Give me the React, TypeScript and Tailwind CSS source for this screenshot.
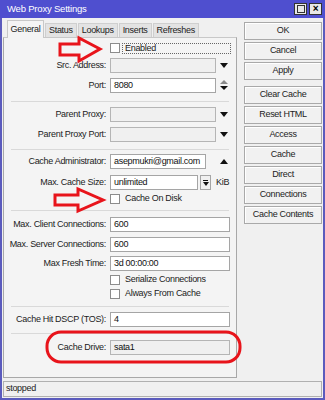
import React from 'react';

const font = 'font-["Liberation_Sans",Arial,sans-serif]';

function Down() {
  return (
    <svg width="8" height="5" viewBox="0 0 8 5"><polygon points="0,0 8,0 4,5" fill="#111" /></svg>
  );
}

function Up() {
  return (
    <svg width="8" height="5" viewBox="0 0 8 5"><polygon points="0,5 8,5 4,0" fill="#111" /></svg>
  );
}

function UpDown() {
  return (
    <svg width="8" height="11" viewBox="0 0 8 11">
      <polygon points="0,4 8,4 4,0" fill="#8a8a8a" />
      <polygon points="0,6 8,6 4,10" fill="#111" />
    </svg>
  );
}

function Input({ value, disabled, w }: { value?: string; disabled?: boolean; w: string }) {
  return (
    <div className={`${w} h-[15px] border ${disabled ? 'border-[#b5b5b5] bg-[#f0f0f0]' : 'border-[#a5a5a5] bg-white'} px-[3px] leading-[13px] text-[#111]`}>
      {value}
    </div>
  );
}

function Row({ label, mt, children }: { label: string; mt: string; children: React.ReactNode }) {
  return (
    <div className={`flex items-center ${mt} h-[15px]`}>
      <div className="w-[103px] shrink-0 pr-[1px] text-right text-[#222]">{label}</div>
      <div className="ml-[3px] flex items-center">{children}</div>
    </div>
  );
}

function Check({ label, mt, focus }: { label: string; mt: string; focus?: boolean }) {
  return (
    <div className={`flex items-center ${mt} h-[12px] pl-[106px]`}>
      <div className="h-[10px] w-[10px] border border-[#8c8c8c] bg-white" />
      {focus ? (
        <div className="ml-[2px] h-[11px] w-[109px] border border-dotted border-[#666] pl-[2px] leading-[9px] text-[#222]">{label}</div>
      ) : (
        <div className="ml-[5px] text-[#222]">{label}</div>
      )}
    </div>
  );
}

function Sep({ mt }: { mt: string }) {
  return <div className={`${mt} mx-[7px] h-px bg-[#d9d9d9]`} />;
}

function Btn({ label, mt }: { label: string; mt: string }) {
  return (
    <div className={`${mt} flex h-[18px] items-center justify-center border border-[#a9a9a9] bg-[#f1f1f1] text-[#222] shadow-[inset_1px_1px_0_#fff]`}>
      {label}
    </div>
  );
}

export default function App() {
  const tabs = ['Status', 'Lookups', 'Inserts', 'Refreshes'];
  return (
    <div className={`relative flex h-[400px] w-[325px] flex-col border-x-2 border-b-2 border-[#5b5bbd] bg-[#f0f0f0] text-[9px] tracking-[-0.3px] ${font}`}>
      <div className="-mx-[2px] flex h-[18px] shrink-0 items-center justify-between bg-[#4f4fcf] pl-[7px] pr-[3px]">
        <span className="text-[9.5px] tracking-[-0.2px] text-white">Web Proxy Settings</span>
        <div className="flex gap-[2px]">
          <div className="flex h-[12px] w-[13px] items-center justify-center border border-[#333] bg-[#e8e8e8]">
            <div className="h-[8px] w-[8px] border border-[#333]" />
          </div>
          <div className="flex h-[12px] w-[13px] items-center justify-center border border-[#333] bg-[#e8e8e8] text-[10px] font-bold leading-none text-black">×</div>
        </div>
      </div>

      <div className="flex flex-1">
        <div className="ml-[1px] flex w-[234px] flex-col">
          <div className="mt-[2px] flex h-[17px] items-end pl-[4px]">
            <div className="relative z-10 -mb-px flex h-[18px] w-[37px] items-center justify-center border border-b-0 border-[#c8c8c8] bg-[#f4f4f4] text-[#222]">General</div>
            {tabs.map((t, i) => (
              <div key={t} className={`flex h-[14px] items-center border border-b-0 border-[#cfcfcf] bg-[#e3e3e3] px-[3px] text-[#222] ${i === 0 ? 'ml-[1px]' : 'ml-[1px]'}`}>
                {t}
              </div>
            ))}
          </div>
          <div className="flex h-[341px] flex-col border border-[#a8a8a8] border-t-[#c8c8c8] bg-[#f4f4f4]">
            <Check label="Enabled" mt="mt-[4px]" focus />
            <Row label="Src. Address:" mt="mt-[4px]">
              <Input w="w-[106px]" disabled />
              <div className="ml-[4px]"><Down /></div>
            </Row>
            <Row label="Port:" mt="mt-[5px]">
              <Input w="w-[106px]" value="8080" />
              <div className="ml-[4px]"><UpDown /></div>
            </Row>
            <Sep mt="mt-[8px]" />
            <Row label="Parent Proxy:" mt="mt-[5px]">
              <Input w="w-[106px]" disabled />
              <div className="ml-[4px]"><Down /></div>
            </Row>
            <Row label="Parent Proxy Port:" mt="mt-[5px]">
              <Input w="w-[106px]" disabled />
              <div className="ml-[4px]"><Down /></div>
            </Row>
            <Sep mt="mt-[7px]" />
            <Row label="Cache Administrator:" mt="mt-[4px]">
              <Input w="w-[96px]" value="asepmukri@gmail.com" />
              <div className="ml-[14px]"><Up /></div>
            </Row>
            <Row label="Max. Cache Size:" mt="mt-[6px]">
              <Input w="w-[88px]" value="unlimited" />
              <div className="ml-[2px] flex h-[15px] w-[11px] flex-col items-center justify-center border border-[#a5a5a5] bg-[#f0f0f0]">
                <div className="h-px w-[5px] bg-[#111]" />
                <svg width="6" height="4" viewBox="0 0 6 4" className="mt-px"><polygon points="0,0 6,0 3,4" fill="#111" /></svg>
              </div>
              <span className="ml-[5px] text-[#222]">KiB</span>
            </Row>
            <Check label="Cache On Disk" mt="mt-[3px]" />
            <Sep mt="mt-[5px]" />
            <Row label="Max. Client Connections:" mt="mt-[6px]">
              <Input w="w-[120px]" value="600" />
            </Row>
            <Row label="Max. Server Connections:" mt="mt-[5px]">
              <Input w="w-[120px]" value="600" />
            </Row>
            <Row label="Max Fresh Time:" mt="mt-[4px]">
              <Input w="w-[120px]" value="3d 00:00:00" />
            </Row>
            <Check label="Serialize Connections" mt="mt-[3px]" />
            <Check label="Always From Cache" mt="mt-[2px]" />
            <Sep mt="mt-[6px]" />
            <Row label="Cache Hit DSCP (TOS):" mt="mt-[5px]">
              <Input w="w-[120px]" value="4" />
            </Row>
            <Sep mt="mt-[6px]" />
            <Row label="Cache Drive:" mt="mt-[6px]">
              <Input w="w-[120px]" value="sata1" disabled />
            </Row>
          </div>
        </div>

        <div className="ml-[7px] mt-[4px] flex w-[78px] flex-col">
          <Btn label="OK" mt="mt-0" />
          <Btn label="Cancel" mt="mt-[2px]" />
          <Btn label="Apply" mt="mt-[2px]" />
          <Btn label="Clear Cache" mt="mt-[6px]" />
          <Btn label="Reset HTML" mt="mt-[2px]" />
          <Btn label="Access" mt="mt-[2px]" />
          <Btn label="Cache" mt="mt-[2px]" />
          <Btn label="Direct" mt="mt-[2px]" />
          <Btn label="Connections" mt="mt-[2px]" />
          <Btn label="Cache Contents" mt="mt-[2px]" />
        </div>
      </div>

      <div className="mb-px ml-[1px] mr-px flex h-[16px] items-center border border-[#b0b0b0] bg-[#f0f0f0] pl-[2px] text-[#222]">stopped</div>

      <svg className="pointer-events-none absolute left-[-2px] top-0" width="325" height="400" viewBox="0 0 325 400">
        <polygon points="60,44 79,44 79,38 100,49 79,61 79,55 60,55" fill="none" stroke="#e8141b" strokeWidth="3" strokeLinejoin="miter" />
        <polygon points="55,195 78,195 78,189 103,200 78,211 78,205 55,205" fill="none" stroke="#e8141b" strokeWidth="3" strokeLinejoin="miter" />
        <rect x="47" y="332" width="193" height="30" rx="14" fill="none" stroke="#e8141b" strokeWidth="3" />
      </svg>
    </div>
  );
}
